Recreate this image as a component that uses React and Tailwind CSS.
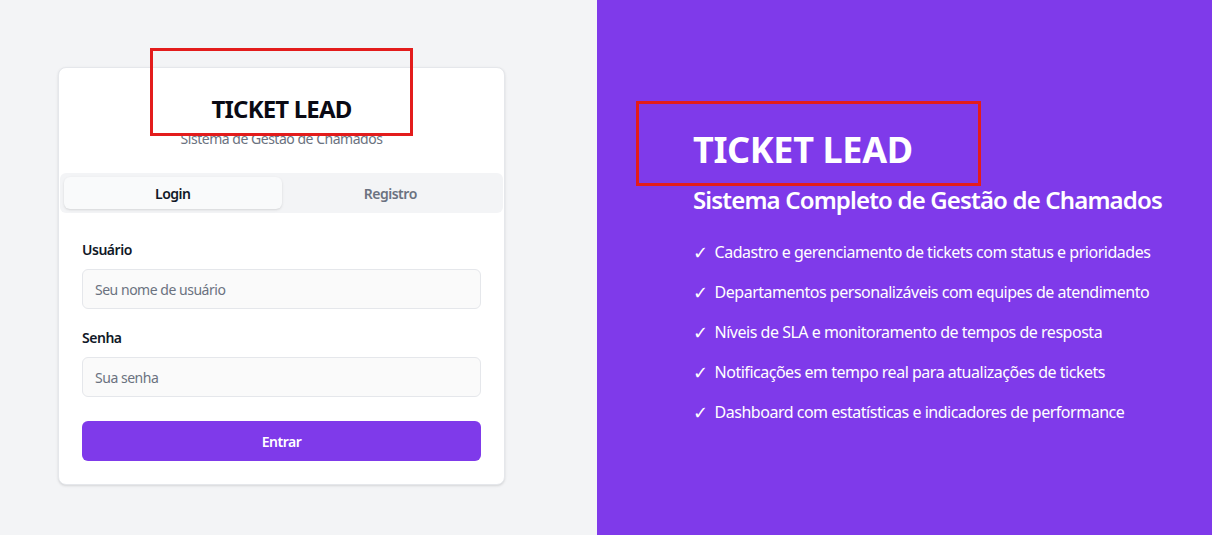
export default function App() {
  const features = [
    "Cadastro e gerenciamento de tickets com status e prioridades",
    "Departamentos personalizáveis com equipes de atendimento",
    "Níveis de SLA e monitoramento de tempos de resposta",
    "Notificações em tempo real para atualizações de tickets",
    "Dashboard com estatísticas e indicadores de performance",
  ];
  return (
    <div
      className="flex h-[535px] w-full overflow-hidden tracking-[-0.03em]"
      style={{ fontFamily: '"Noto Sans", "Open Sans", sans-serif' }}
    >
      <div className="flex w-[597px] shrink-0 items-center justify-center bg-[#f3f4f6] pt-[17px] pr-[34px]">
        <div className="relative w-[447px] rounded-lg border border-[#e5e7eb] bg-white shadow-sm">
          <div className="absolute left-[91px] top-[-20px] h-[88px] w-[263px] border-[3px] border-[#e31c1c]" />
          <div className="flex flex-col items-center pt-[27px] pb-[24px]">
            <h1 className="text-[24px] font-bold leading-[28px] tracking-[-0.035em] text-[#0a0a14]">TICKET LEAD</h1>
            <p className="mt-[6px] text-[14px] leading-[20px] text-[#6b7280]">Sistema de Gestão de Chamados</p>
          </div>
          <div className="mx-[1px] flex rounded-md bg-[#f3f4f6] p-[4px]">
            <button className="h-[32px] flex-1 rounded-md bg-[#f9fafb] text-[14px] font-semibold text-[#111827] shadow-sm">Login</button>
            <button className="h-[32px] flex-1 text-[14px] font-semibold text-[#6b7280]">Registro</button>
          </div>
          <div className="px-[23px] pt-[27px] pb-[23px]">
            <label className="block text-[14px] font-semibold leading-[20px] text-[#111827]">Usuário</label>
            <div className="mt-[9px] flex h-[40px] items-center rounded-md border border-[#e5e7eb] bg-[#fafafa] px-[12px] text-[14px] text-[#6b7280]">Seu nome de usuário</div>
            <label className="mt-[19px] block text-[14px] font-semibold leading-[20px] text-[#111827]">Senha</label>
            <div className="mt-[9px] flex h-[40px] items-center rounded-md border border-[#e5e7eb] bg-[#fafafa] px-[12px] text-[14px] text-[#6b7280]">Sua senha</div>
            <button className="mt-[24px] h-[40px] w-full rounded-md bg-[#7f3aea] text-[14px] font-semibold text-white">Entrar</button>
          </div>
        </div>
      </div>
      <div className="flex flex-1 items-center bg-[#7f3aea] pl-[96px] pt-[18px] text-white">
        <div className="relative">
          <div className="absolute left-[-57px] top-[-29px] h-[85px] w-[345px] border-[3px] border-[#e31c1c]" />
          <h2 className="text-[36px] font-bold leading-[40px] tracking-[-0.01em]">TICKET LEAD</h2>
          <p className="mt-[14px] text-[24px] font-semibold leading-[32px] tracking-[-0.035em]">Sistema Completo de Gestão de Chamados</p>
          <ul className="mt-[24px] flex flex-col gap-[16px]">
            {features.map((f) => (
              <li key={f} className="flex text-[16px] leading-[24px]">
                <span className="mr-[7px] text-[18px] leading-[24px]">✓</span>
                <span>{f}</span>
              </li>
            ))}
          </ul>
        </div>
      </div>
    </div>
  );
}
